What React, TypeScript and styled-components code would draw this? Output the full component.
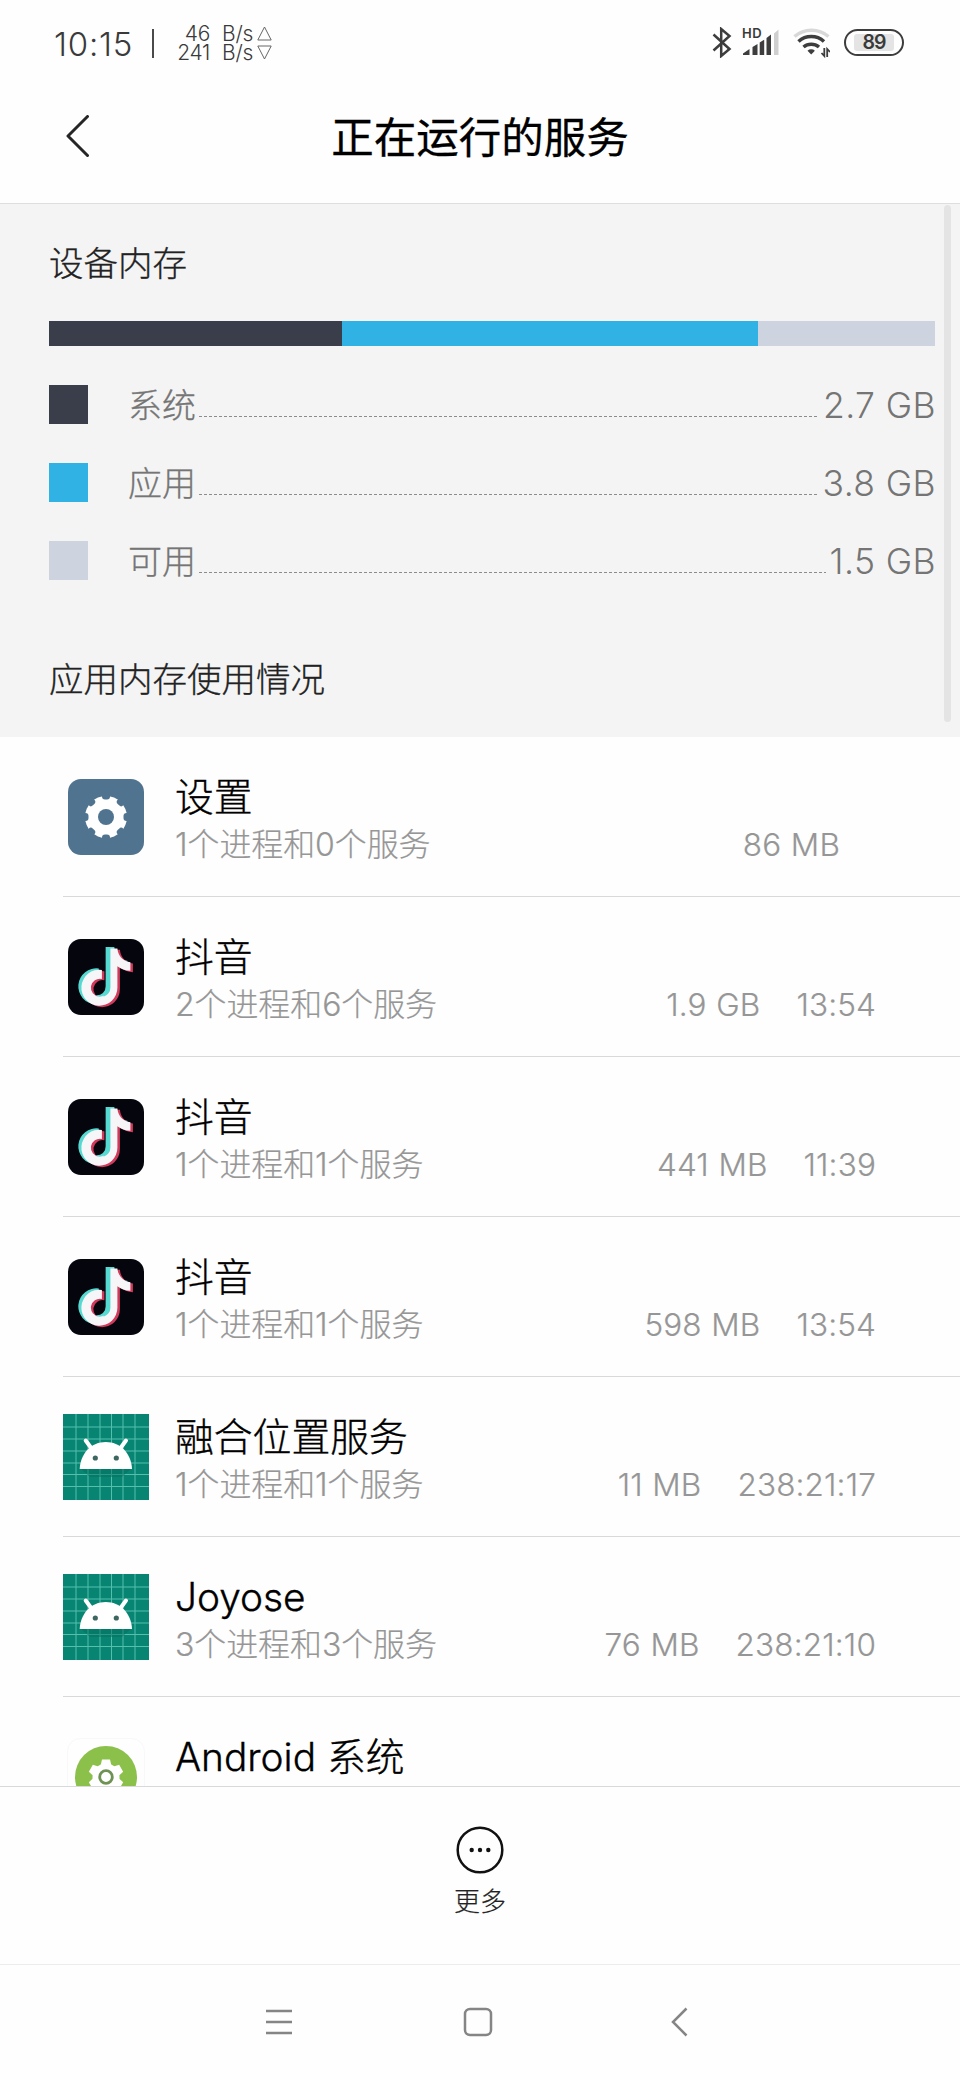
import React from "react";
import styled, { createGlobalStyle } from "styled-components";

const GlobalStyle = createGlobalStyle`
  * { box-sizing: border-box; }
  body {
    margin: 0;
    background: #fefefe;
    font-family: Inter, "Noto Sans CJK SC", sans-serif;
    font-weight: 300;
  }
  svg { display: block; flex: none; }
`;

const Screen = styled.div`
  width: 960px;
  height: 2080px;
  display: flex;
  flex-direction: column;
  background: #fefefe;
  overflow: hidden;
`;

const StatusBar = styled.div`
  height: 84px;
  padding: 0 56px 0 54px;
  display: flex;
  align-items: center;
  color: #3a3a3a;
`;

const Clock = styled.span`
  margin-top: 3px;
  width: 82px;
  font-size: 33px;
  font-weight: 350;
  line-height: 40px;
  letter-spacing: 0.8px;
`;

const Divider = styled.span`
  width: 2px;
  height: 29px;
  margin: 3px 22px 0 16px;
  background: #4a4a4a;
`;

const NetSpeed = styled.div`
  display: grid;
  grid-template-columns: 34px 32px 15px;
  grid-auto-rows: 19px;
  column-gap: 11px;
  margin-top: 2px;
  align-items: center;
  justify-items: end;
  font-size: 21px;
  font-weight: 350;
  line-height: 19px;
  letter-spacing: -0.3px;

  svg { margin-left: -7px; justify-self: start; }
`;

const StatusIcons = styled.div`
  margin-left: auto;
  display: flex;
  align-items: center;
`;

const Signal = styled.div`
  position: relative;
  margin: 0 14px 0 10px;
`;

const HdTag = styled.span`
  position: absolute;
  left: 0;
  top: -3px;
  font-size: 13px;
  font-weight: 600;
  line-height: 14px;
  letter-spacing: 0.6px;
`;

const Battery = styled.div`
  width: 60px;
  height: 27px;
  margin-left: 14px;
  padding: 3px 8px;
  border: 2px solid #3d3d3d;
  border-radius: 14px;
`;

const BatteryLevel = styled.div`
  height: 17px;
  display: flex;
  align-items: center;
  justify-content: center;
  background: #e4e4e4;
  border-radius: 3px;
  font-size: 19.5px;
  font-weight: 600;
  letter-spacing: -1px;
`;

const TitleBar = styled.header`
  height: 120px;
  padding: 0 64px 12px;
  display: grid;
  grid-template-columns: 28px 1fr 28px;
  align-items: center;
  border-bottom: 1px solid #dedede;
`;

const PageTitle = styled.h1`
  margin: 0;
  text-align: center;
  font-size: 42.5px;
  font-weight: 400;
  line-height: 60px;
  color: #000;
  -webkit-text-stroke: 0.3px #000;
`;

const MemoryPanel = styled.section`
  position: relative;
  height: 533px;
  padding: 37px 25px 0 49px;
  background: #f4f4f4;
`;

const ScrollThumb = styled.div`
  position: absolute;
  right: 9px;
  top: 1px;
  width: 7px;
  height: 517px;
  border-radius: 4px;
  background: #e4e4e4;
`;

const SectionTitle = styled.h2`
  margin: 0;
  font-size: 34.5px;
  font-weight: 300;
  line-height: 46px;
  color: #222;
  -webkit-text-stroke: 0.3px #222;
`;

const UsageBar = styled.div`
  display: flex;
  height: 25px;
  margin: 34px 0 39px;
`;

const UsagePart = styled.div<{ $color: string; $share: number }>`
  flex: ${(p) => p.$share} 1 0;
  background: ${(p) => p.$color};
`;

const Legend = styled.div`
  display: flex;
  flex-direction: column;
  gap: 39px;
  margin-bottom: 77px;
`;

const LegendRow = styled.div`
  height: 39px;
  display: flex;
  align-items: center;
  font-size: 34px;
  line-height: 39px;
  color: #757575;
`;

const Swatch = styled.span<{ $color: string }>`
  width: 39px;
  height: 39px;
  margin-right: 40px;
  background: ${(p) => p.$color};
`;

const LegendLabel = styled.span`
  padding-top: 2px;
  -webkit-text-stroke: 0.3px #757575;
`;

const Leader = styled.span`
  flex: 1;
  height: 1px;
  margin: 23px 4px 0 3px;
  background: repeating-linear-gradient(90deg, #8c8c8c 0 3px, transparent 3px 5px);
`;

const Amount = styled.span`
  padding-top: 2px;
  font-size: 35.5px;
  letter-spacing: 0.4px;
  margin-right: -1px;
`;

const ProcessList = styled.main`
  height: 1049px;
  overflow: hidden;
`;

const ProcessRow = styled.div`
  height: 160px;
  margin-left: 63px;
  padding-right: 84px;
  display: flex;
  align-items: center;
  border-bottom: 1px solid #d9d9d9;
`;

const IconSlot = styled.div`
  width: 86px;
  margin-right: 26px;
  display: flex;
  justify-content: center;
`;

const ProcessInfo = styled.div`
  flex: 1;
  padding-top: 6px;
`;

const ProcessName = styled.div`
  font-size: 38.8px;
  line-height: 50px;
  color: #000;
  -webkit-text-stroke: 0.35px #000;
`;

const ProcessMeta = styled.div`
  display: flex;
  font-size: 32px;
  line-height: 46px;
  color: #969696;
`;

const Detail = styled.span`
  flex: 1;
  letter-spacing: -0.1px;
  -webkit-text-stroke: 0.2px #969696;
`;

const Figure = styled.span`
  margin-left: 36px;
  font-size: 31.5px;
  letter-spacing: 0.15px;
  word-spacing: 0.5px;
  -webkit-text-stroke: 0.2px #969696;
`;

const ActionBar = styled.footer`
  height: 178px;
  padding-top: 39px;
  display: flex;
  flex-direction: column;
  align-items: center;
  border-top: 1px solid #d9d9d9;
`;

const ActionLabel = styled.span`
  margin-top: 8px;
  font-size: 26px;
  line-height: 40px;
  color: #222;
  -webkit-text-stroke: 0.2px #222;
`;

const NavBar = styled.nav`
  height: 116px;
  padding: 0 272px 2px 265px;
  display: flex;
  align-items: center;
  justify-content: space-between;
  border-top: 1px solid #ececec;
`;

const NavButton = styled.div<{ $gap?: number }>`
  display: flex;
  margin-right: ${(p) => p.$gap ?? 0}px;
`;

const Triangle = ({ down = false }: { down?: boolean }) => (
  <svg width="15" height="15" viewBox="0 0 15 15" fill="none" stroke="#666" strokeWidth="1">
    <path d={down ? "M.8 1h13.400L7.500 14z" : "M.8 14h13.400L7.500 1z"} />
  </svg>
);

const BluetoothIcon = () => (
  <svg width="20" height="31" viewBox="0 0 20 31" fill="none" stroke="#3d3d3d" strokeWidth="2.500">
    <path d="M1.500 7.500 17.500 22 9.200 29V2l8.300 7L1.500 23.500" />
  </svg>
);

const SignalIcon = () => (
  <svg width="37" height="27" viewBox="0 0 37 27" fill="#3d3d3d">
    <path d="M1 26v-1.500L7.500 20v6zM10.500 26v-8l5-3v11zM17.700 26V13.500l4.500-2.800V26zM24.500 26V9l4.500-3.500V26z" />
    <path d="M32 26V4.500L36.500.5V26z" fill="#cfcfcf" />
  </svg>
);

const WifiIcon = () => (
  <svg width="37" height="31" viewBox="0 0 37 31" fill="none">
    <path d="M1.500 9.500a26 26 0 0 1 34 0" stroke="#d8d8d8" strokeWidth="3.500" />
    <path d="M5.500 14.500a19 19 0 0 1 25.500 0M10.500 20a12 12 0 0 1 15.500 0" stroke="#3d3d3d" strokeWidth="3.500" />
    <path d="M18.200 27.500l-3.700-3.700a5.500 5.500 0 0 1 7.400 0z" fill="#3d3d3d" />
    <path d="M31.300 21v8l-2.800-3M34.200 30v-8l2.800 3" stroke="#3d3d3d" strokeWidth="1.800" />
  </svg>
);

const BackIcon = () => (
  <svg width="28" height="46" viewBox="0 0 28 46" fill="none" stroke="#262626" strokeWidth="3" strokeLinecap="round" strokeLinejoin="round">
    <path d="M23.500 1.500 4 21l19.500 19.500" />
  </svg>
);

const SettingsIcon = () => (
  <svg width="76" height="76" viewBox="-38 -38 76 76">
    <rect x="-38" y="-38" width="76" height="76" rx="13" fill="#50748f" />
    <circle r="21" fill="#fff" />
    {[0, 45, 90, 135, 180, 225, 270, 315].map((angle) => (
      <rect key={angle} x="-4" y="-26" width="8" height="8.500" rx="3" fill="#50748f" transform={`rotate(${angle})`} />
    ))}
    <circle r="8" fill="#50748f" />
  </svg>
);

const NOTE =
  "M40 9h8.500c.6 7.500 6 13 13 13.800v8.600c-5-.1-9.600-1.900-13-4.600v21.500a18 18 0 1 1-15.500-17.800v9a9 9 0 1 0 7 8.800z";

const DouyinIcon = () => (
  <svg width="76" height="76" viewBox="0 0 76 76">
    <rect width="76" height="76" rx="13" fill="#04050d" />
    <path d={NOTE} fill="#56d9d0" transform="translate(-2.200 -1)" />
    <path d={NOTE} fill="#d23a5c" transform="translate(3.400 1.800)" />
    <path d={NOTE} fill="#f6f6f8" transform="translate(.9 .4)" />
    <path d="M37.800 8h4.600v40.500a9.500 9.500 0 0 1-7 9.300q2.400-4 2.400-9z" fill="#56d9d0" />
  </svg>
);

const AndroidIcon = () => (
  <svg width="86" height="86" viewBox="0 0 86 86">
    <rect width="86" height="86" fill="#088572" />
    <path d="M13 0v86M25 0v86M37 0v86M48.500 0v86M60 0v86M72 0v86M0 13h86M0 25h86M0 37h86M0 49h86M0 60.500h86M0 72.500h86" stroke="#55bfae" strokeWidth="1" />
    <path d="M18 55h50l-9 8H27z" fill="#04705f" opacity=".5" />
    <path d="M22.700 26.500 30 36.500M63 26.500 55.700 36.500" stroke="#fff" strokeWidth="4" strokeLinecap="round" />
    <path d="M16.700 55C17.500 39 28.500 28 42.800 28S68.200 39 69 55z" fill="#fff" />
    <circle cx="32.300" cy="44" r="2.600" fill="#3d6660" />
    <circle cx="53.300" cy="44" r="2.600" fill="#3d6660" />
  </svg>
);

const AndroidSystemIcon = () => (
  <svg width="80" height="80" viewBox="-40 -40 80 80">
    <rect x="-38.500" y="-38.500" width="77" height="77" rx="13" fill="#fefefe" stroke="#f8f8f8" />
    <circle r="31" fill="#8bc04b" />
    <circle r="13.500" fill="#fff" />
    {[0, 60, 120, 180, 240, 300].map((angle) => (
      <path key={angle} d="M-5.500-11-4-17.500h8L5.500-11z" fill="#fff" transform={`rotate(${angle})`} />
    ))}
    <circle r="6.300" fill="#fff" stroke="#6f9254" strokeWidth="2.800" />
  </svg>
);

const MoreIcon = () => (
  <svg width="48" height="48" viewBox="0 0 48 48">
    <circle cx="24" cy="24" r="22.300" fill="none" stroke="#111" strokeWidth="2.500" />
    <circle cx="15.700" cy="24" r="2.200" fill="#111" />
    <circle cx="24" cy="24" r="2.200" fill="#111" />
    <circle cx="32.300" cy="24" r="2.200" fill="#111" />
  </svg>
);

const memory = [
  { label: "系统", amount: "2.7 GB", color: "#3a3d4a", share: 293 },
  { label: "应用", amount: "3.8 GB", color: "#31b2e4", share: 416 },
  { label: "可用", amount: "1.5 GB", color: "#cdd4e0", share: 177 },
];

const processes = [
  { icon: SettingsIcon, name: "设置", detail: "1个进程和0个服务", size: "86 MB", time: "" },
  { icon: DouyinIcon, name: "抖音", detail: "2个进程和6个服务", size: "1.9 GB", time: "13:54" },
  { icon: DouyinIcon, name: "抖音", detail: "1个进程和1个服务", size: "441 MB", time: "11:39" },
  { icon: DouyinIcon, name: "抖音", detail: "1个进程和1个服务", size: "598 MB", time: "13:54" },
  { icon: AndroidIcon, name: "融合位置服务", detail: "1个进程和1个服务", size: "11 MB", time: "238:21:17" },
  { icon: AndroidIcon, name: "Joyose", detail: "3个进程和3个服务", size: "76 MB", time: "238:21:10" },
  { icon: AndroidSystemIcon, name: "Android 系统", detail: "", size: "", time: "" },
];

export default function App() {
  return (
    <Screen>
      <GlobalStyle />
      <StatusBar>
        <Clock>10:15</Clock>
        <Divider />
        <NetSpeed>
          <span>46</span>
          <span>B/s</span>
          <Triangle />
          <span>241</span>
          <span>B/s</span>
          <Triangle down />
        </NetSpeed>
        <StatusIcons>
          <BluetoothIcon />
          <Signal>
            <HdTag>HD</HdTag>
            <SignalIcon />
          </Signal>
          <WifiIcon />
          <Battery>
            <BatteryLevel>89</BatteryLevel>
          </Battery>
        </StatusIcons>
      </StatusBar>

      <TitleBar>
        <BackIcon />
        <PageTitle>正在运行的服务</PageTitle>
      </TitleBar>

      <MemoryPanel>
        <SectionTitle>设备内存</SectionTitle>
        <UsageBar>
          {memory.map((m) => (
            <UsagePart key={m.label} $color={m.color} $share={m.share} />
          ))}
        </UsageBar>
        <Legend>
          {memory.map((m) => (
            <LegendRow key={m.label}>
              <Swatch $color={m.color} />
              <LegendLabel>{m.label}</LegendLabel>
              <Leader />
              <Amount>{m.amount}</Amount>
            </LegendRow>
          ))}
        </Legend>
        <SectionTitle>应用内存使用情况</SectionTitle>
        <ScrollThumb />
      </MemoryPanel>

      <ProcessList>
        {processes.map(({ icon: Icon, name, detail, size, time }, i) => (
          <ProcessRow key={i}>
            <IconSlot>
              <Icon />
            </IconSlot>
            <ProcessInfo>
              <ProcessName>{name}</ProcessName>
              <ProcessMeta>
                <Detail>{detail || "\u00a0"}</Detail>
                <Figure>{size}</Figure>
                <Figure>{time}</Figure>
              </ProcessMeta>
            </ProcessInfo>
          </ProcessRow>
        ))}
      </ProcessList>

      <ActionBar>
        <MoreIcon />
        <ActionLabel>更多</ActionLabel>
      </ActionBar>

      <NavBar>
        <NavButton>
          <svg width="28" height="26" viewBox="0 0 28 26" stroke="#858585" strokeWidth="2.500">
            <path d="M1 2h26M1 13h26M1 24h26" />
          </svg>
        </NavButton>
        <NavButton $gap={8}>
          <svg width="30" height="30" viewBox="0 0 30 30" fill="none" stroke="#858585" strokeWidth="2.500">
            <rect x="2" y="2" width="26" height="26" rx="5" />
          </svg>
        </NavButton>
        <NavButton>
          <svg width="17" height="30" viewBox="0 0 17 30" fill="none" stroke="#858585" strokeWidth="2.500">
            <path d="M15.500 1.500 2 15l13.500 13.500" />
          </svg>
        </NavButton>
      </NavBar>
    </Screen>
  );
}
